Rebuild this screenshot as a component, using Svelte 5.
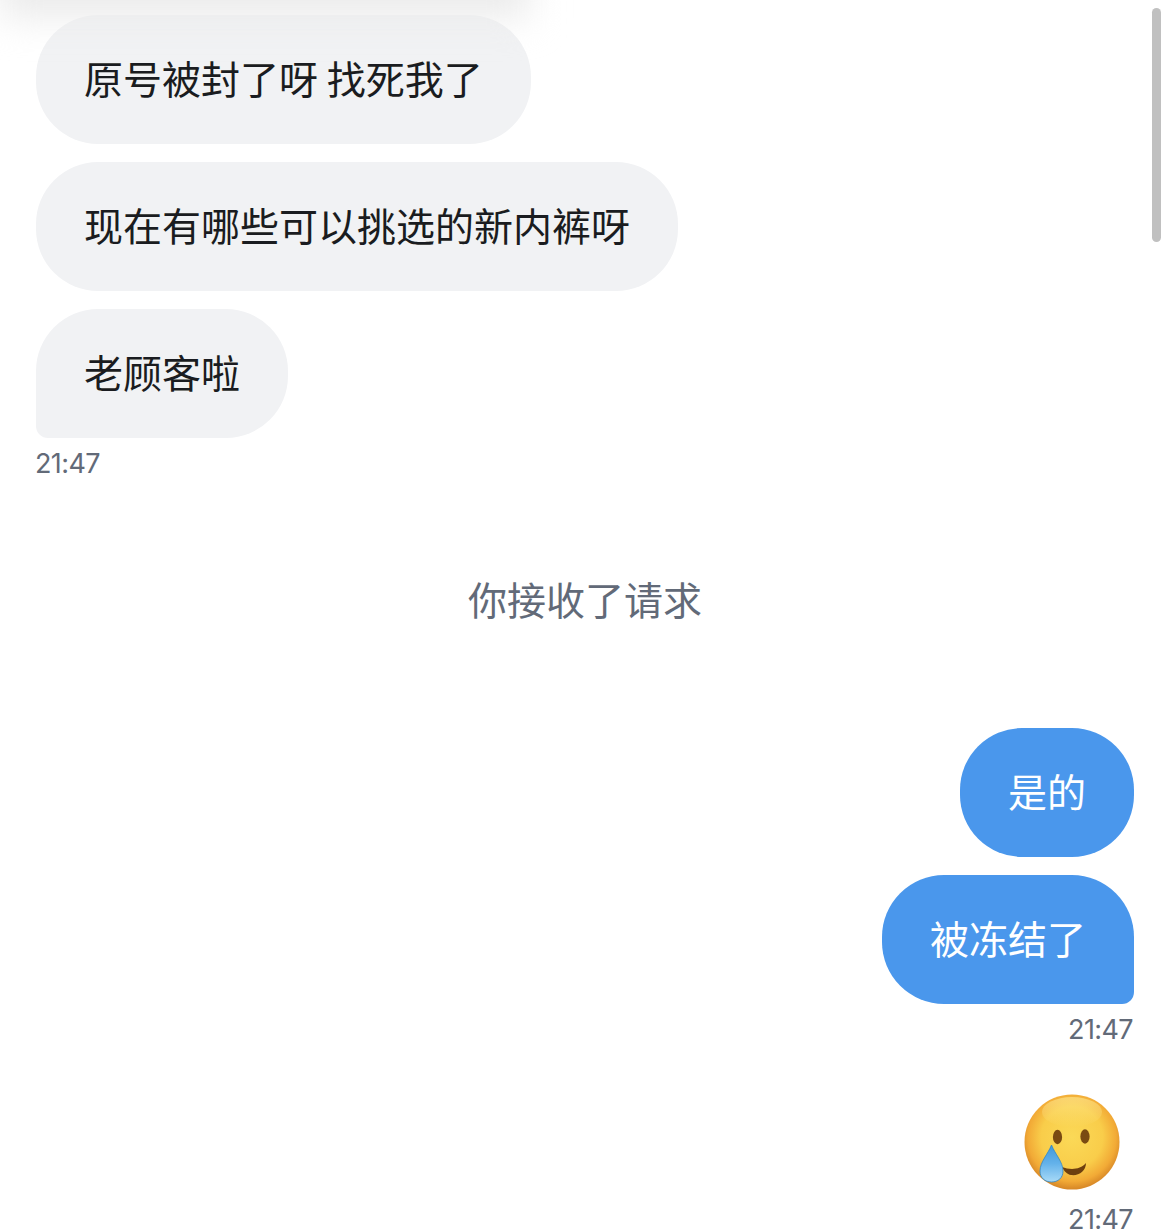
<script>
	const incoming = ['原号被封了呀 找死我了', '现在有哪些可以挑选的新内裤呀', '老顾客啦'];
	const outgoing = ['是的', '被冻结了'];
</script>

<div class="top-fade"></div>
<div class="scrollbar"></div>

<main class="chat">
	<section class="group">
		{#each incoming as text}
			<div class="bubble in">{text}</div>
		{/each}
		<div class="time">21:47</div>
	</section>

	<div class="system">你接收了请求</div>

	<section class="group right">
		{#each outgoing as text}
			<div class="bubble out">{text}</div>
		{/each}
		<div class="time">21:47</div>
	</section>

	<section class="group right emoji-group">
		<svg class="emoji" viewBox="0 0 96 96" width="96" height="96" aria-label="smiling face with tear">
			<defs>
				<radialGradient id="face" cx="50%" cy="45%" r="54%">
					<stop offset="0%" stop-color="#fbd957" />
					<stop offset="60%" stop-color="#f9cd4a" />
					<stop offset="86%" stop-color="#f2aa36" />
					<stop offset="100%" stop-color="#d98a28" />
				</radialGradient>
				<linearGradient id="shine" x1="0" y1="0" x2="0" y2="1">
					<stop offset="0%" stop-color="#ffeb94" stop-opacity="0.6" />
					<stop offset="100%" stop-color="#ffeb94" stop-opacity="0" />
				</linearGradient>
				<linearGradient id="tear" x1="0" y1="0" x2="0" y2="1">
					<stop offset="0%" stop-color="#3f97da" />
					<stop offset="50%" stop-color="#64b2ea" />
					<stop offset="100%" stop-color="#a8daf7" />
				</linearGradient>
			</defs>
			<circle cx="48" cy="48" r="47.5" fill="url(#face)" />
			<ellipse cx="48" cy="18" rx="30" ry="15" fill="url(#shine)" />
			<ellipse cx="33.5" cy="43" rx="4.6" ry="7.2" fill="#7a4a12" />
			<ellipse cx="61" cy="42.5" rx="4.6" ry="7.2" fill="#7a4a12" />
			<path d="M38 73 C46 76 56 76 62 69 C62 77 55 82 47 81 C43 80.500 40 77 38 73 Z" fill="#6e3f0f" />
			<path d="M27.500 51 C31 60 39 68 39 77 C39 84 34 88 27.500 88 C21 88 16 84 16 77 C16 68 24 60 27.500 51 Z" fill="url(#tear)" stroke="#2f86c8" stroke-width="0.8" />
		</svg>
		<div class="time">21:47</div>
	</section>
</main>

<style>
	:global(body) {
		margin: 0;
		background: #fff;
		overflow: hidden;
		height: 1231px;
	}

	.chat {
		display: flex;
		flex-direction: column;
		padding: 15px 34px 0 36px;
		font-family: 'Inter', 'Noto Sans CJK SC', sans-serif;
	}

	.group {
		display: flex;
		flex-direction: column;
		align-items: flex-start;
		gap: 18px;
	}

	.group.right {
		align-items: flex-end;
		margin-top: 105px;
	}

	.bubble {
		height: 129px;
		box-sizing: border-box;
		padding: 0 48px 6px;
		display: flex;
		align-items: center;
		border-radius: 62px;
		font-size: 39px;
		font-family: 'Noto Sans CJK SC', sans-serif;
		font-weight: 400;
		white-space: pre;
	}

	.bubble.in {
		background: #f1f2f4;
		color: #1a1c20;
	}

	.bubble.in:nth-last-child(2) {
		border-bottom-left-radius: 12px;
	}

	.bubble.out {
		background: #4a97ec;
		color: #fff;
	}

	.bubble.out:nth-last-child(2) {
		border-bottom-right-radius: 12px;
	}

	.time {
		margin: -9px 0 0 -1px;
		font-size: 27px;
		letter-spacing: -0.6px;
		line-height: 34px;
		color: #626a78;
	}

	.right .time {
		margin-right: 1px;
	}

	.system {
		margin-top: 92px;
		text-align: center;
		font-family: 'Noto Sans CJK SC', sans-serif;
		font-size: 39px;
		line-height: 50px;
		color: #626a78;
	}

	.group.emoji-group {
		margin-top: 47px;
		gap: 13px;
	}

	.emoji-group .time {
		margin-top: 0;
	}

	.emoji {
		display: block;
		margin-right: 14px;
	}

	.top-fade {
		position: absolute;
		top: -42px;
		left: 0;
		width: 530px;
		height: 60px;
		background: #ebebeb;
		filter: blur(18px);
	}

	.scrollbar {
		position: absolute;
		top: 8px;
		left: 1152px;
		width: 9px;
		height: 234px;
		border-radius: 5px;
		background: #c0c0c0;
	}
</style>
